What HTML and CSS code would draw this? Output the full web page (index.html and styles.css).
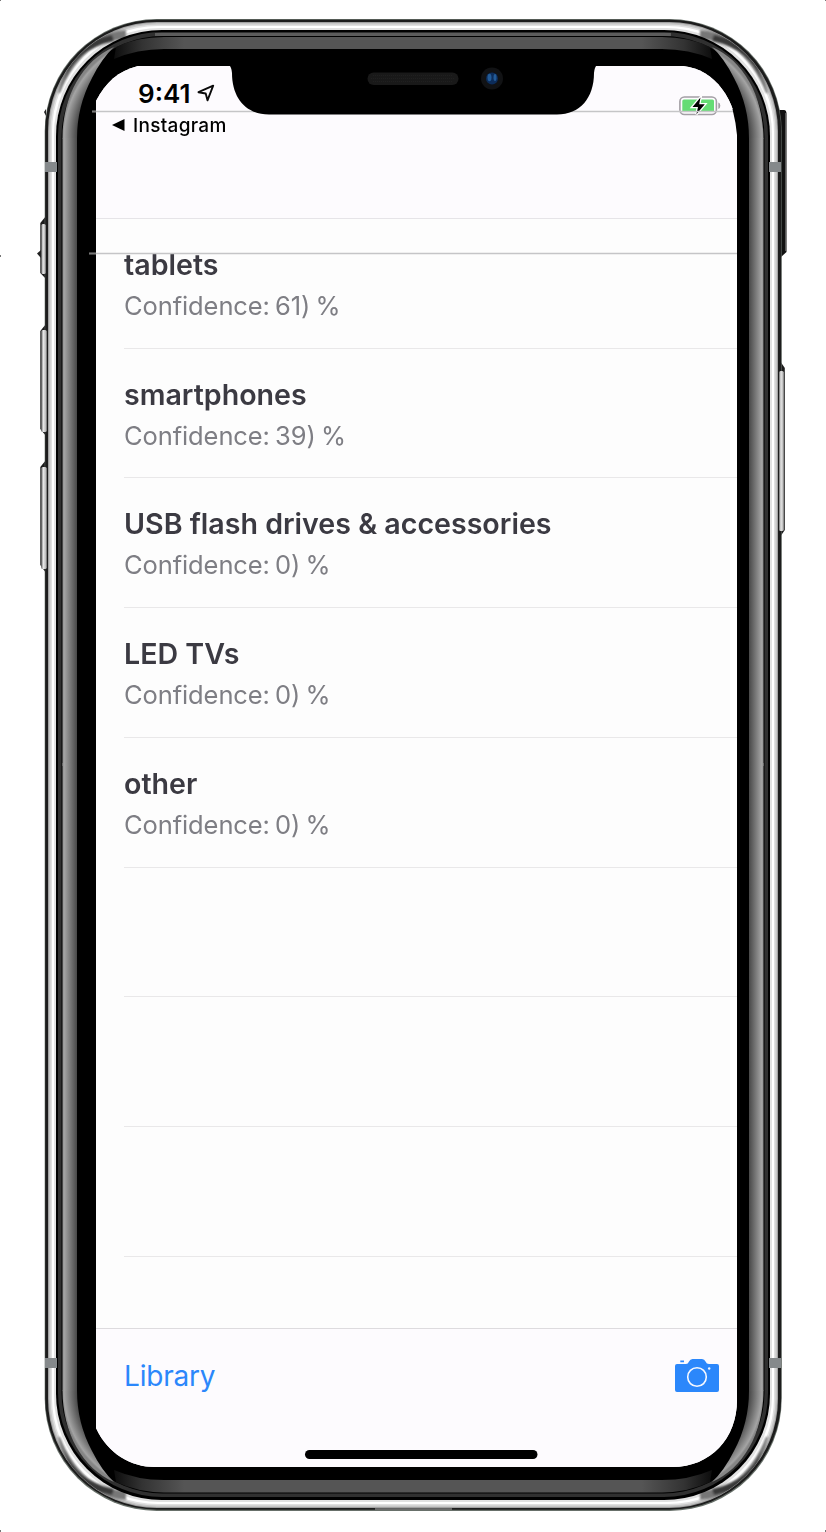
FILE: index.html
```html
<!DOCTYPE html>
<html lang="en">
<head>
<meta charset="utf-8">
<title>Classifier</title>
<link rel="stylesheet" href="styles.css">
</head>
<body>
<div class="device">
  <svg class="frame" viewBox="0 0 826 1532" aria-hidden="true">
    <defs>
      <linearGradient id="side" gradientUnits="userSpaceOnUse" x1="62" y1="0" x2="77" y2="0"><stop offset="0" stop-color="#858585"/><stop offset=".15" stop-color="#a4a4a4"/><stop offset="1" stop-color="#484848"/></linearGradient>
      <radialGradient id="corner" gradientUnits="userSpaceOnUse" cx="164.500" cy="138" r="102.500"><stop offset=".7" stop-color="#000"/><stop offset=".855" stop-color="#484848"/><stop offset=".98" stop-color="#a4a4a4"/><stop offset="1" stop-color="#858585"/></radialGradient>
      <linearGradient id="gt" gradientUnits="userSpaceOnUse" x1="112" y1="0" x2="714" y2="0"><stop offset="0" stop-color="#0a0a0a"/><stop offset=".05" stop-color="#333"/><stop offset=".12" stop-color="#555"/><stop offset=".88" stop-color="#555"/><stop offset=".95" stop-color="#333"/><stop offset="1" stop-color="#0a0a0a"/></linearGradient>
      <linearGradient id="btn" x1="0" y1="0" x2="1" y2="0"><stop offset="0" stop-color="#666"/><stop offset=".4" stop-color="#e8e8e8"/><stop offset="1" stop-color="#aaa"/></linearGradient>
      <filter id="soft" x="-20%" y="-20%" width="140%" height="140%"><feGaussianBlur stdDeviation="1.300"/></filter>
      <clipPath id="band"><rect x="48.500" y="22.500" width="729" height="1485" rx="108"/></clipPath>
      <g id="shade"><path d="M60 93Q71 64 93 47Q108 40 126 39L126 30Q91 33 73 58Q62 72 58 93Z" fill="#777"/><path d="M65 80Q75 50 114 41L112 35Q84 40 73 56Q68 64 65 80Z" fill="#393939"/></g>
      <g id="highlight"><path d="M114 47Q102 58 92 78Q77 106 77 138.500H62.500C62.500 96 83 60 114 47Z" fill="url(#corner)"/><path d="M62.500 138H77V766H62.500Z" fill="url(#side)"/></g>
    </defs>
    <!-- side keys -->
    <path d="M46 216L40.300 223V273L46 279ZM46 324L40.300 331V429L46 436ZM46 460L40.300 467V565L46 573Z" fill="#1b1b1b"/>
    <path d="M37 253.500L41 250V258Z" fill="#222"/>
    <path d="M780 361L784.800 368V530L780 537Z" fill="#1b1b1b"/>
    <path d="M778 110H784Q786.500 110 786.500 114V252L781 257H778Z" fill="#111"/><path d="M785.800 113V251" stroke="#777"/>
    <path d="M46 109L44 112L46 116Z" fill="#222"/>
    <!-- steel band -->
    <rect x="44.700" y="19" width="737" height="1492" rx="112" fill="#68706a"/>
    <rect x="45.200" y="19.700" width="736" height="1490" rx="112" fill="#1c1c1c"/>
    <g fill="url(#btn)"><rect x="41.200" y="224" width="4.500" height="50" rx="1.500"/><rect x="41.200" y="330" width="5.500" height="102" rx="1.500"/><rect x="41.200" y="467" width="5.500" height="102" rx="1.500"/><rect x="779" y="371" width="4.800" height="160" rx="1.500"/></g>
    <rect x="48" y="22" width="730" height="1486" rx="109" fill="#a2a2a2"/>
    <rect x="49" y="23" width="728" height="1484" rx="108" fill="#c6c6c6"/>
    <rect x="50.500" y="24.500" width="725" height="1481" rx="107" fill="#e0e0e0"/>
    <rect x="52" y="26" width="722" height="1478" rx="106" fill="#fff"/>
    <rect x="54" y="28" width="718" height="1474" rx="106" fill="#e2e2e2"/>
    <g clip-path="url(#band)"><g filter="url(#soft)">
      <use href="#shade"/><use href="#shade" transform="translate(826 0) scale(-1 1)"/>
      <use href="#shade" transform="translate(0 1530) scale(1 -1)"/><use href="#shade" transform="translate(826 1530) scale(-1 -1)"/>
    </g></g>
    <rect x="56" y="30" width="714" height="1470" rx="106" fill="#000"/>
    <rect x="58" y="32" width="710" height="1465" rx="104" fill="#303030"/>
    <path d="M155 34.500H671" stroke="#5c5c5c" stroke-width="3"/>
    <rect x="61.500" y="36" width="703" height="1457.500" rx="101" fill="#000"/>
    <!-- bezel highlights -->
    <use href="#highlight"/><use href="#highlight" transform="translate(826 0) scale(-1 1)"/>
    <use href="#highlight" transform="translate(0 1529) scale(1 -1)"/><use href="#highlight" transform="translate(826 1529) scale(-1 -1)"/>
    <path d="M116 47Q137 37 164 37H662Q689 37 710 47L712 59Q689 49 662 49H164Q137 49 114 59ZM116 1482Q137 1492 164 1492.500H662Q689 1492 710 1482L712 1470Q689 1480 662 1480H164Q137 1480 114 1470Z" fill="url(#gt)"/>
    <!-- antenna breaks -->
    <path d="M45 162H57V172H45ZM769 162H781V172H769ZM45 1358H57V1368H45ZM769 1358H781V1368H769Z" fill="#85898b"/>
    <path d="M375 1509H452" stroke="#aaa"/>
    <path d="M0 0H1V1H0ZM825 0H826V1H825ZM0 1530H1V1532H0ZM825 1530H826V1532H825ZM0 255H1V257H0Z" fill="#777"/>
  </svg>

  <main class="screen">
    <header class="navbar">
      <div class="status">
        <span class="time">9:41</span>
        <svg class="location" viewBox="0 0 18 18"><path d="M1.500 8.200L16.200 1.700L10.500 16.300L8.700 9.500Z" fill="none" stroke="#0a0a0a" stroke-width="1.900" stroke-linejoin="round"/></svg>
        <svg class="battery" viewBox="0 0 42 20"><rect x=".9" y="1" width="36.500" height="17.500" rx="4.500" fill="#fdfbfe" stroke="#a39fa5" stroke-width="1.600"/><rect x="3.300" y="3.500" width="31.700" height="12.500" rx="1.600" fill="#65dc74"/><path d="M39.300 6.500Q41.300 7 41.300 9.800T39.300 13Z" fill="#a39fa5"/><path d="M21.500 1.500L13.500 11H19L17.400 18.200L25.800 8.300H20.200Z" fill="#000" stroke="#fff" stroke-width="2.600" paint-order="stroke"/></svg>
      </div>
      <a class="back"><svg viewBox="0 0 13 12"><path d="M0 6L12.500 0V12Z" fill="#000"/></svg><span>Instagram</span></a>
    </header>
    <ul class="results">
      <li><h2>tablets</h2><p>Confidence: 61) %</p></li>
      <li><h2>smartphones</h2><p>Confidence: 39) %</p></li>
      <li><h2>USB flash drives &amp; accessories</h2><p>Confidence: 0) %</p></li>
      <li><h2>LED TVs</h2><p>Confidence: 0) %</p></li>
      <li><h2>other</h2><p>Confidence: 0) %</p></li>
      <li></li>
      <li></li>
      <li></li>
    </ul>
    <footer class="toolbar">
      <a class="library">Library</a>
      <svg class="camera" viewBox="0 0 44 34"><path d="M2 6H11Q13 6 14 3.500Q15.200 1 17.500 1H27Q29.500 1 30.500 3.500Q31.500 6 34 6H42Q44 6 44 8V32Q44 34 42 34H2Q0 34 0 32V8Q0 6 2 6ZM5.300 2.500H9V4.300H5.300Z" fill="#2b87fb"/><circle cx="22" cy="19" r="9.300" fill="none" stroke="#f5f8ff" stroke-width="1.600"/><circle cx="34.200" cy="10.500" r="1.200" fill="#f5f8ff"/></svg>
    </footer>
  </main>

  <svg class="overlay" viewBox="0 0 826 1532" aria-hidden="true">
    <path d="M92 111.500H737M89 253.500H737" stroke="#c5c5c7" stroke-width="1.600"/>
    <path d="M92 111.500H96M89 253.500H96" stroke="#777" stroke-width="1.600"/>
    <path d="M737 109V135Q736 123 732.500 109Z" fill="#000"/>
    <path d="M229 65H597Q594.500 67 594 73C594 98 580 114.500 557 114.500H269C246 114.500 232 98 232 73Q231.500 67 229 65Z" fill="#000"/>
    <rect x="367.500" y="72.500" width="91" height="12.500" rx="6.200" fill="#191919"/>
    <path d="M373 75.500H453M371 78.500H455M373 81.500H453" stroke="#202020" stroke-dasharray="1 1"/>
    <circle cx="492" cy="78.500" r="11" fill="#111214"/><circle cx="492" cy="78.500" r="6" fill="#0c2c5a"/>
    <ellipse cx="489.500" cy="77.500" rx="2" ry="3.800" fill="#235b97"/><ellipse cx="495" cy="77.500" rx="1.500" ry="3.500" fill="#235b97"/>
    <rect x="305" y="1450" width="232.500" height="9" rx="4.500" fill="#000"/>
  </svg>
</div>
</body>
</html>
```

FILE: styles.css
```css
* { box-sizing: border-box; margin: 0; padding: 0; }
body { background: #fff; font-family: Inter, "Liberation Sans", sans-serif; }
.device { position: relative; width: 826px; height: 1532px; padding: 66px 0 0 96px; overflow: hidden; }
.frame, .overlay { position: absolute; left: 0; top: 0; width: 826px; height: 1532px; }
.overlay { pointer-events: none; }
.screen {
  position: relative;
  display: flex;
  flex-direction: column;
  width: 641px;
  height: 1401px;
  background: #fdfdfd;
  clip-path: path("M42 0H587C619 3 641 35 641 69V1334C641 1372 615 1401 576 1401H59C35 1401 12 1388 0 1362V35C10 16 22 5 42 0Z");
}
.navbar { height: 153px; background: #fdfbfe; border-bottom: 1.500px solid #e6e4e8; }
.status { display: flex; height: 48px; padding-left: 42px; }
.time { width: 59px; font-size: 26px; font-weight: 600; line-height: 55px; letter-spacing: 0; white-space: nowrap; }
.location { width: 18px; height: 18px; margin-top: 18px; }
.battery { width: 42px; height: 20px; margin: 30px 16px 0 auto; }
.back { display: flex; align-items: center; gap: 8px; height: 22px; padding-left: 16px; font-size: 19px; font-weight: 500; letter-spacing: .3px; }
.back svg { width: 13px; height: 12px; }
.results { height: 1109px; list-style: none; overflow: hidden; }
.results li { height: 129.720px; margin-left: 28px; padding-top: 28px; border-bottom: 1px solid #e9e8e9; }
.results h2 { font-size: 28.600px; line-height: 36px; font-weight: 600; color: #3b3a42; white-space: nowrap; }
.results p { margin-top: 7px; font-size: 25.500px; line-height: 32px; letter-spacing: -.1px; word-spacing: -1.800px; color: #7e7e84; white-space: nowrap; }
.toolbar { display: flex; justify-content: space-between; align-items: flex-start; height: 139px; padding: 29px 18px 0 28px; background: #fdfbfe; border-top: 1.500px solid #dddbde; }
.library { font-size: 28px; line-height: 36px; letter-spacing: -.2px; color: #2b87fb; }
.camera { width: 44px; height: 34px; }
```
